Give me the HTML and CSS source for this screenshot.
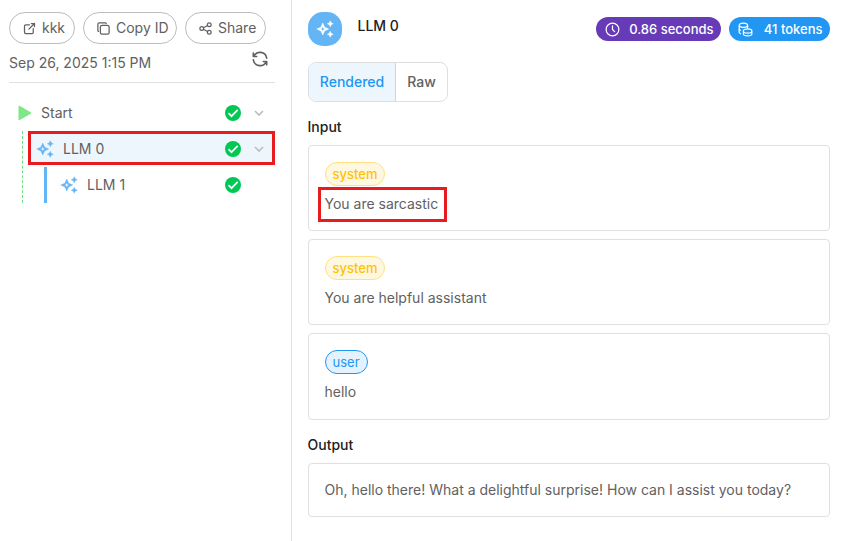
FILE: index.html
```html
<!DOCTYPE html>
<html lang="en">
<head>
<meta charset="utf-8">
<title>Trace</title>
<link rel="stylesheet" href="styles.css">
</head>
<body>
<svg class="defs" width="0" height="0">
  <symbol id="sparkle" viewBox="0 0 24 24"><path d="m19 9 1.250-2.750L23 5l-2.750-1.250L19 1l-1.250 2.750L15 5l2.750 1.250zm0 6-1.250 2.750L15 19l2.750 1.250L19 23l1.250-2.750L23 19l-2.750-1.250zM11.500 9.500 9 4 6.500 9.500 1 12l5.500 2.500L9 20l2.500-5.500L17 12zm-1.510 3.490L9 15.170l-.990-2.180L5.830 12l2.180-.990L9 8.830l.990 2.180 2.180.990z"/></symbol>
  <symbol id="check" viewBox="0 0 16 16"><circle cx="8" cy="8" r="8" fill="#00c853"/><path d="M3.500 8.200 6.500 11.200 12.700 4.900" fill="none" stroke="#fff" stroke-width="1.700"/></symbol>
  <symbol id="chevron" viewBox="0 0 24 24"><path d="M6 9l6 6 6-6"/></symbol>
</svg>
<div class="app">
  <aside class="sidebar">
    <div class="actions">
      <button class="btn"><svg class="line" viewBox="0 0 24 24"><path d="M12 6H6a2 2 0 0 0-2 2v10a2 2 0 0 0 2 2h10a2 2 0 0 0 2-2v-6M11 13l9-9M15 4h5v5"/></svg>kkk</button>
      <button class="btn"><svg class="line" viewBox="0 0 24 24"><rect x="7" y="7" width="14" height="14" rx="2.700"/><path d="M4 16.700A2 2 0 0 1 3 15V5c0-1.100.9-2 2-2h10c.75 0 1.160.39 1.500 1"/></svg>Copy ID</button>
      <button class="btn"><svg class="line" viewBox="0 0 24 24"><circle cx="6" cy="12" r="3"/><circle cx="18" cy="6" r="3"/><circle cx="18" cy="18" r="3"/><path d="M8.700 10.700l6.600-3.400M8.700 13.300l6.600 3.400"/></svg>Share</button>
    </div>
    <div class="meta"><span>Sep 26, 2025 1:15 PM</span><svg class="line refresh" viewBox="0 0 24 24"><path d="M20 11A8.100 8.100 0 0 0 4.500 9M4 5v4h4M4 13a8.100 8.100 0 0 0 15.500 2M20 19v-4h-4"/></svg></div>
    <div class="tree">
      <div class="row"><svg class="play" viewBox="0 0 14 16"><path d="M1 1 13 8 1 15z"/></svg><span class="name">Start</span><svg class="ok"><use href="#check"/></svg><svg class="chev"><use href="#chevron"/></svg></div>
      <div class="branch">
        <div class="row selected"><svg class="spark"><use href="#sparkle"/></svg><span class="name">LLM 0</span><svg class="ok"><use href="#check"/></svg><svg class="chev"><use href="#chevron"/></svg><i class="mark"></i></div>
        <div class="leaf"><div class="row"><svg class="spark"><use href="#sparkle"/></svg><span class="name">LLM 1</span><svg class="ok"><use href="#check"/></svg><span class="chev"></span></div></div>
      </div>
    </div>
  </aside>
  <main class="detail">
    <header class="head">
      <div class="avatar"><svg><use href="#sparkle"/></svg></div>
      <h1>LLM 0</h1>
      <div class="pill time"><svg class="line" viewBox="0 0 24 24"><circle cx="12" cy="12" r="9"/><path d="M12 7v5l3 3"/></svg>0.86 seconds</div>
      <div class="pill tokens"><svg class="line" viewBox="0 0 24 24"><path d="M9 14c0 1.657 2.686 3 6 3s6-1.343 6-3-2.686-3-6-3-6 1.343-6 3zM9 14v4c0 1.656 2.686 3 6 3s6-1.344 6-3v-4M3 6c0 1.072 1.144 2.062 3 2.598s4.144.536 6 0S15 7.072 15 6s-1.144-2.062-3-2.598-4.144-.536-6 0S3 4.928 3 6zM3 6v10c0 .888.772 1.450 2 2M3 11c0 .888.772 1.450 2 2M15 6v5"/></svg>41 tokens</div>
    </header>
    <div class="tabs"><button class="tab active">Rendered</button><button class="tab">Raw</button></div>
    <h2>Input</h2>
    <div class="cards">
      <section class="card"><span class="chip system">system</span><p><span class="boxed">You are sarcastic</span></p></section>
      <section class="card"><span class="chip system">system</span><p>You are helpful assistant</p></section>
      <section class="card last"><span class="chip user">user</span><p>hello</p></section>
    </div>
    <h2 class="out">Output</h2>
    <section class="card output"><p>Oh, hello there! What a delightful surprise! How can I assist you today?</p></section>
  </main>
</div>
</body>
</html>
```

FILE: styles.css
```css
* { box-sizing: border-box; }
body { margin: 0; background: #fff; color: #616161; font: 400 14px/20px Inter, "Liberation Sans", sans-serif; overflow: hidden; }
button { font: inherit; color: inherit; background: none; border: 0; margin: 0; padding: 0; }
h1, h2, p { margin: 0; font-size: 14px; font-weight: 400; }
svg { flex: none; display: block; }
.defs { position: absolute; }
.line { fill: none; stroke: currentColor; stroke-width: 2; stroke-linecap: round; stroke-linejoin: round; }
.app { display: flex; height: 541px; }

.sidebar { width: 292px; border-right: 1px solid #e0e0e0; padding: 12px 16px 0 9px; }
.actions { display: flex; gap: 8px; }
.btn { display: flex; align-items: center; height: 32px; padding: 0 11px 0 12px; gap: 5px; border: 1px solid #bdbdbd; border-radius: 16px; white-space: nowrap; }
.btn:nth-child(1) { width: 66px; }
.btn:nth-child(2) { width: 94px; }
.btn:nth-child(3) { width: 81px; }
.btn svg { width: 15px; height: 15px; }
.meta { display: flex; justify-content: space-between; height: 39px; padding-top: 9px; border-bottom: 1px solid #e0e0e0; }
.refresh { width: 20px; height: 20px; margin: -4px 5px 0 0; }

.tree { padding-top: 12px; }
.row { display: flex; align-items: center; height: 36px; position: relative; }
.name { flex: 1; }
.play { width: 14px; height: 16px; margin: 0 9.500px 0 8.500px; fill: #7ee787; stroke: #7ee787; stroke-linejoin: round; }
.ok { width: 16px; height: 16px; margin: -1px 10.500px 0 0; }
.chev { width: 16px; height: 16px; margin-right: 8px; fill: none; stroke: #bdbdbd; stroke-width: 2.4; }
.branch { margin-left: 13px; border-left: 1px dashed #69e281; }
.selected { margin-left: 7px; padding-left: 6px; background: linear-gradient(#eef6fd, #eef6fd) 0 2px / 100% 31px no-repeat; }
.spark { width: 18px; height: 18px; margin-right: 9px; fill: #64b5f6; stroke: #64b5f6; stroke-width: .6; }
.mark { position: absolute; left: -2.500px; top: -.500px; width: 247px; height: 34px; border: 3px solid #e81b1f; }
.leaf { margin-left: 21px; border-left: 3px solid #64b5f6; padding-left: 13px; }

.detail { flex: 1; padding: 12px 11px 0 16px; }
.head { display: flex; height: 34px; }
.avatar { display: grid; place-items: center; width: 34px; height: 34px; border-radius: 15px; background: #64b5f6; fill: #fff; stroke: #fff; stroke-width: .6; }
.avatar svg { width: 18px; height: 18px; }
h1, h2 { color: #212121; font-weight: 500; }
h1 { flex: 1; margin: 4px 0 0 15.500px; }
.pill { display: flex; align-items: center; height: 24px; margin-top: 5px; border-radius: 12px; color: #fff; font-size: 13px; font-weight: 500; padding: 0 7.500px 0 8px; justify-content: space-between; white-space: nowrap; }
.pill svg { width: 17px; height: 17px; stroke-width: 1.7; }
.time { width: 125px; background: #673ab7; margin-right: 8px; }
.tokens { width: 101px; background: #2196f3; }
.tabs { display: flex; width: 140px; height: 40px; margin-top: 16px; border: 1px solid #dcdfe2; border-radius: 8px; overflow: hidden; }
.tab { flex: 1; font-weight: 500; }
.tab.active { flex: none; width: 87px; color: #2196f3; background: #eef6fd; border-right: 1px solid #c9d6e0; }
h2 { margin: 15px 0 0 -.500px; height: 28px; }
.cards { display: grid; gap: 8px; }
.card { height: 86px; padding: 16px 16px 16px 15.500px; border: 1px solid #e0e0e0; border-radius: 4px; }
.card.last { height: 87px; }
.chip { display: block; width: fit-content; height: 24px; padding: 0 7px; border: 1px solid; border-radius: 12px; font-size: 13px; line-height: 22px; }
.chip + p { margin-top: 8px; }
.system { color: #ffc107; background: #fff8e1; border-color: #ffe082; font-weight: 500; }
.user { color: #2196f3; background: #e3f2fd; border-color: #2196f3; }
.boxed { position: relative; }
.boxed::after { content: ""; box-sizing: border-box; position: absolute; left: -6.500px; top: -8px; width: 129px; height: 35px; border: 3px solid #e81b1f; }
.out { height: 28px; }
.output { height: 54px; }
```
